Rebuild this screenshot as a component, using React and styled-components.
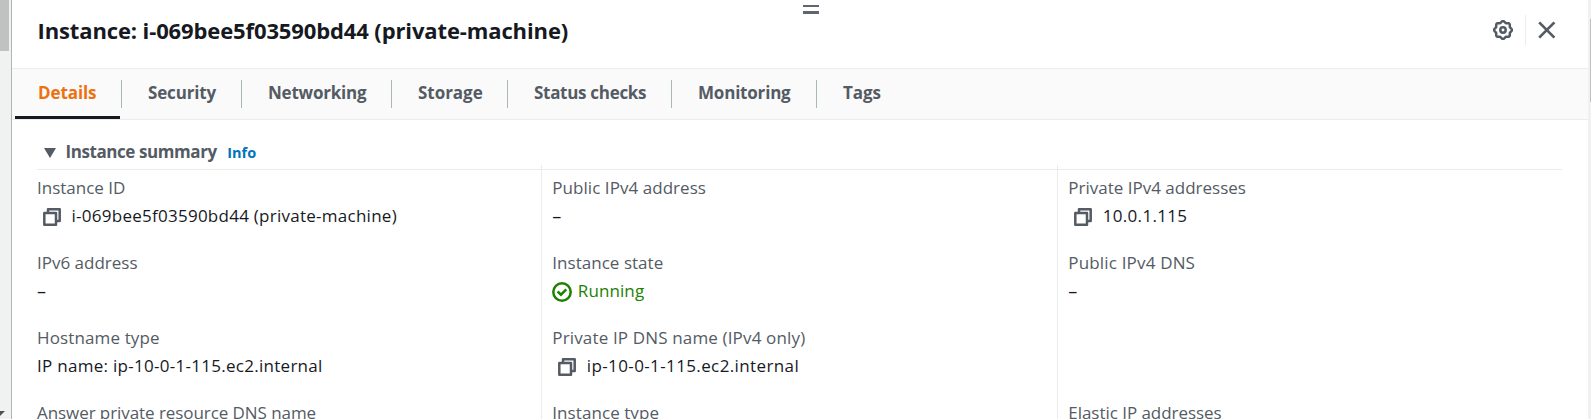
import React from "react";
import styled, { createGlobalStyle } from "styled-components";

const GlobalStyle = createGlobalStyle`
  * { box-sizing: border-box; }
  body {
    margin: 0;
    overflow: hidden;
    background: #fff;
    color: #16191f;
    font-family: "Open Sans", "Noto Sans", sans-serif;
    font-size: 17px;
  }
  h1, h2, dl, dt, dd { margin: 0; }
`;

const Window = styled.div`
  display: flex;
  height: 419px;
  overflow: hidden;
`;

const PageScrollbar = styled.div`
  width: 11px;
  flex: none;
  display: flex;
  flex-direction: column;
  justify-content: space-between;
  background: #f1f1f1;
`;

const PageThumb = styled.div`
  width: 9px;
  height: 51px;
  background: #c1c1c1;
`;

const ScrollArrow = styled.svg`
  display: block;
  width: 5px;
  height: 8px;
`;

const PanelScrollbar = styled.div`
  width: 3px;
  flex: none;
  padding: 19px 0 0 2px;
  background: #f1f1f1;
`;

const PanelThumb = styled.div`
  height: 83px;
  background: #c1c1c1;
`;

const Panel = styled.main`
  flex: 1;
  min-width: 0;
  border-left: 1px solid #aab7b8;
`;

const Header = styled.header`
  position: relative;
  height: 68px;
  padding: 14px 31px 0 25.5px;
  display: flex;
  justify-content: space-between;
  align-items: flex-start;
`;

const ResizeHandle = styled.div`
  position: absolute;
  top: 5px;
  left: 791px;
  width: 16px;
  height: 9px;
  border: solid #5f666f;
  border-width: 2.5px 0;
  border-top-width: 2px;
  border-bottom-width: 3px;
`;

const Title = styled.h1`
  font-size: 22px;
  line-height: 32px;
  font-weight: 700;
  letter-spacing: -0.12px;
  white-space: nowrap;
`;

const Actions = styled.div`
  display: flex;
  align-items: center;
  height: 30px;
  margin-top: 1px;
`;

const IconButton = styled.button`
  display: flex;
  border: 0;
  padding: 0;
  background: none;
  color: #545b64;
`;

const ActionDivider = styled.div`
  width: 1px;
  height: 30px;
  margin: 0 11px 0 12px;
  background: #eaeded;
`;

const TabBar = styled.nav`
  display: flex;
  height: 52px;
  background: #fafafa;
  border: solid #eaeded;
  border-width: 1px 0;
`;

const Tab = styled.div`
  display: flex;
  flex-direction: column;
  justify-content: space-between;
  width: ${(p) => p.$width}px;
  padding: 11px 0 0;
`;

const TabLabel = styled.div`
  height: 28px;
  line-height: 25px;
  padding-left: 26px;
  font-weight: 700;
  white-space: nowrap;
  letter-spacing: ${(p) => p.$spacing}px;
  color: ${(p) => (p.$active ? "#ec7211" : "#545b64")};
  border-right: ${(p) => (p.$last ? "0" : "1px solid #aab7b8")};
`;

const TabIndicator = styled.div`
  height: 3px;
  margin: 0 2px 0 3px;
  background: #16191f;
`;

const Content = styled.section`
  padding: 17px 26px 0 25px;
`;

const SummaryHeader = styled.div`
  display: flex;
  align-items: center;
  height: 32px;
  padding-left: 7px;
`;

const Caret = styled.svg`
  width: 12px;
  height: 10px;
  color: #545b64;
`;

const SummaryTitle = styled.h2`
  margin-left: 9.5px;
  font-size: 17px;
  line-height: 30px;
  padding-bottom: 2px;
  font-weight: 700;
  letter-spacing: -0.42px;
  color: #545b64;
`;

const InfoLink = styled.a`
  margin-left: 10.5px;
  font-size: 14.5px;
  line-height: 30px;
  font-weight: 700;
  color: #0073bb;
`;

const Rule = styled.div`
  height: 1px;
  background: #eaeded;
`;

const Columns = styled.div`
  display: grid;
  grid-template-columns: 504px 516px 1fr;
  margin-top: -5px;
`;

const Column = styled.dl`
  height: 254px;
  padding: 10px 0 0 ${(p) => (p.$divided ? 10.3 : 0)}px;
  border-left: ${(p) => (p.$divided ? "1px solid #eaeded" : "0")};
`;

const Field = styled.div`
  height: 75px;
  white-space: nowrap;
`;

const Label = styled.dt`
  height: 28px;
  line-height: 26px;
  letter-spacing: ${(p) => p.$spacing || 0}px;
  color: #545b64;
`;

const Value = styled.dd`
  display: flex;
  align-items: center;
  height: 28px;
  line-height: 28px;
  letter-spacing: ${(p) => p.$spacing || 0}px;
  color: ${(p) => (p.$running ? "#1d8102" : "#16191f")};
`;

const ValueText = styled.span`
  height: 30px;
`;

const EmptyValue = styled.span`
  height: 30px;
  font-size: 18px;
`;

const CopyGlyph = styled.svg`
  width: 18px;
  height: 18px;
  margin: 0 11px 1px 5.5px;
  color: #545b64;
`;

const StatusGlyph = styled.svg`
  width: 20px;
  height: 20px;
  margin: 0 5.5px 1px 0;
`;

const CopyIcon = () => (
  <CopyGlyph viewBox="0 0 18 18" fill="none" stroke="currentColor" strokeWidth="2.5" strokeLinejoin="round">
    <path d="M1.3 5H13V16.7H1.3Z" />
    <path d="M5 5V1.3H16.7V13H13" />
  </CopyGlyph>
);

const RunningIcon = () => (
  <StatusGlyph viewBox="0 0 20 20" fill="none" stroke="currentColor" strokeWidth="2.5">
    <circle cx="10" cy="10" r="8.7" />
    <path d="M5.6 9.5L9 12.7L14.3 7.4" />
  </StatusGlyph>
);

const gearPath = Array.from({ length: 73 }, (_, i) => {
  const a = (i / 72) * Math.PI * 2;
  const r = 8.2 + 0.75 * Math.cos(8 * a);
  return `${i ? "L" : "M"}${(10 + r * Math.sin(a)).toFixed(2)} ${(10 - r * Math.cos(a)).toFixed(2)}`;
}).join("") + "Z";

const GearIcon = () => (
  <svg width="20" height="20" viewBox="0 0 20 20" fill="none" stroke="currentColor" strokeWidth="2.5">
    <path d={gearPath} />
    <circle cx="10" cy="10" r="2.7" />
  </svg>
);

const CloseIcon = () => (
  <svg width="20" height="20" viewBox="0 0 20 20" stroke="currentColor" strokeWidth="2.7">
    <path d="M2.2 2.4L17.4 17.6M17.4 2.4L2.2 17.6" />
  </svg>
);

const tabs = [
  { label: "Details", width: 110, spacing: -0.1, active: true },
  { label: "Security", width: 120, spacing: -0.17 },
  { label: "Networking", width: 150, spacing: -0.22 },
  { label: "Storage", width: 116, spacing: -0.03 },
  { label: "Status checks", width: 164, spacing: -0.3 },
  { label: "Monitoring", width: 145, spacing: -0.2 },
  { label: "Tags", width: 100, spacing: -0.1 },
];

const columns = [
  [
    { label: "Instance ID", value: "i-069bee5f03590bd44 (private-machine)", valueSpacing: 0.26, copy: true },
    { label: "IPv6 address", value: "–" },
    { label: "Hostname type", labelSpacing: 0.13, value: "IP name: ip-10-0-1-115.ec2.internal", valueSpacing: 0.28 },
    { label: "Answer private resource DNS name", labelSpacing: -0.07 },
  ],
  [
    { label: "Public IPv4 address", labelSpacing: 0.05, value: "–" },
    { label: "Instance state", labelSpacing: 0.03, value: "Running", valueSpacing: 0.1, running: true },
    { label: "Private IP DNS name (IPv4 only)", labelSpacing: 0.15, value: "ip-10-0-1-115.ec2.internal", valueSpacing: 0.38, copy: true },
    { label: "Instance type", labelSpacing: 0.07 },
  ],
  [
    { label: "Private IPv4 addresses", value: "10.0.1.115", valueSpacing: 0.3, copy: true },
    { label: "Public IPv4 DNS", labelSpacing: 0.17, value: "–" },
    null,
    { label: "Elastic IP addresses", labelSpacing: -0.04 },
  ],
];

function DetailField({ field }) {
  if (!field) return <Field />;
  return (
    <Field>
      <Label $spacing={field.labelSpacing}>{field.label}</Label>
      {field.value && (
        <Value $spacing={field.valueSpacing} $running={field.running}>
          {field.copy && <CopyIcon />}
          {field.running && <RunningIcon />}
          {field.value === "–" ? <EmptyValue>–</EmptyValue> : <ValueText>{field.value}</ValueText>}
        </Value>
      )}
    </Field>
  );
}

export default function App() {
  return (
    <Window>
      <GlobalStyle />
      <PageScrollbar>
        <PageThumb />
        <ScrollArrow viewBox="0 0 5 8">
          <path d="M0 0H5L0 5Z" fill="#505050" />
        </ScrollArrow>
      </PageScrollbar>
      <Panel>
        <Header>
          <ResizeHandle />
          <Title>Instance: i-069bee5f03590bd44 (private-machine)</Title>
          <Actions>
            <IconButton aria-label="Preferences"><GearIcon /></IconButton>
            <ActionDivider />
            <IconButton aria-label="Close"><CloseIcon /></IconButton>
          </Actions>
        </Header>
        <TabBar>
          {tabs.map((tab, i) => (
            <Tab key={tab.label} $width={tab.width}>
              <TabLabel $active={tab.active} $spacing={tab.spacing} $last={i === tabs.length - 1}>
                {tab.label}
              </TabLabel>
              {tab.active && <TabIndicator />}
            </Tab>
          ))}
        </TabBar>
        <Content>
          <SummaryHeader>
            <Caret viewBox="0 0 12 10"><path d="M0 0H12L6 10Z" fill="currentColor" /></Caret>
            <SummaryTitle>Instance summary</SummaryTitle>
            <InfoLink>Info</InfoLink>
          </SummaryHeader>
          <Rule />
          <Columns>
            {columns.map((fields, i) => (
              <Column key={i} $divided={i > 0}>
                {fields.map((field, j) => <DetailField key={j} field={field} />)}
              </Column>
            ))}
          </Columns>
        </Content>
      </Panel>
      <PanelScrollbar><PanelThumb /></PanelScrollbar>
    </Window>
  );
}
